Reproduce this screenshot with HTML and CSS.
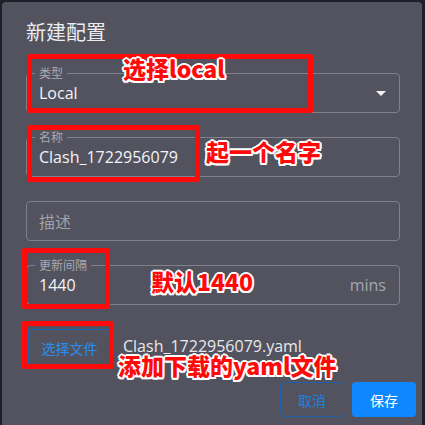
FILE: index.html
```html
<!DOCTYPE html>
<html lang="zh">
<head>
<meta charset="utf-8">
<link rel="stylesheet" href="styles.css">
</head>
<body>
<div class="dialog">
  <div class="title">新建配置</div>
  <div class="form">
    <div class="field">
      <span class="label">类型</span>
      <span class="value">Local</span>
      <svg class="caret" width="10" height="5" viewBox="0 0 10 5"><path d="M0 0 L10 0 L5 5 Z" fill="#f2f2f2"/></svg>
    </div>
    <div class="field">
      <span class="label">名称</span>
      <span class="value">Clash_1722956079</span>
    </div>
    <div class="field">
      <span class="placeholder">描述</span>
    </div>
    <div class="field">
      <span class="label">更新间隔</span>
      <span class="value">1440</span>
      <span class="unit">mins</span>
    </div>
    <div class="file-row">
      <div class="file-btn">选择文件</div>
      <span class="file-name">Clash_1722956079.yaml</span>
    </div>
  </div>
  <div class="actions">
    <div class="btn btn-outline">取消</div>
    <div class="btn btn-primary">保存</div>
  </div>
</div>

<div class="mark mark1"></div>
<div class="mark mark2"></div>
<div class="mark mark3"></div>
<div class="mark mark4"></div>
<div class="note note1">选择local</div>
<div class="note note2">起一个名字</div>
<div class="note note3">默认1440</div>
<div class="note note4">添加下载的yaml文件</div>
</body>
</html>
```

FILE: styles.css
```css
* { box-sizing: border-box; }
html, body {
  margin: 0;
  padding: 0;
  width: 425px;
  height: 425px;
  overflow: hidden;
  background: #20202a;
  font-family: "Open Sans", "Liberation Sans", "Noto Sans CJK SC", sans-serif;
}
.dialog {
  margin: 2px 0 0 2px;
  width: 420px;
  height: 440px;
  background: #52535e;
  border-radius: 4px;
  padding: 15px 0 0 0;
}
.title {
  padding: 0 24px;
  font-size: 20px;
  line-height: 30px;
  color: #ececf0;
  font-family: "Noto Sans CJK SC", sans-serif;
}
.form {
  margin-top: 26px;
  padding: 0 22px 0 24px;
  display: flex;
  flex-direction: column;
  gap: 24px;
}
.field {
  position: relative;
  height: 40px;
  border: 1px solid #80818c;
  border-radius: 4px;
  display: flex;
  align-items: center;
  padding: 0 13px 0 12px;
}
.label {
  position: absolute;
  top: -9px;
  left: 8px;
  padding: 0 4px;
  font-size: 12px;
  line-height: 16px;
  color: #a9aab3;
  background: #52535e;
  font-family: "Noto Sans CJK SC", sans-serif;
}
.value {
  flex: 1;
  font-size: 16px;
  color: #f4f4f6;
  line-height: 20px;
}
.placeholder {
  flex: 1;
  font-size: 16px;
  color: #a0a1aa;
  font-family: "Noto Sans CJK SC", sans-serif;
}
.caret { display: block; }
.unit {
  font-size: 16px;
  color: #a5a6ae;
}
.file-row {
  display: flex;
  align-items: center;
  gap: 12px;
}
.file-btn {
  width: 83px;
  height: 37px;
  margin-left: 2px;
  border: 1px solid #1e66b8;
  border-radius: 2px;
  display: flex;
  align-items: center;
  justify-content: center;
  font-size: 14px;
  color: #2a8ef0;
  font-family: "Noto Sans CJK SC", sans-serif;
}
.file-name {
  font-size: 16px;
  color: #e8e8ec;
  margin-top: -3px;
}
.actions {
  display: flex;
  justify-content: flex-end;
  gap: 8px;
  padding: 0 6px 0 0;
  margin-top: 16px;
}
.btn {
  width: 64px;
  height: 35px;
  border-radius: 4px;
  display: flex;
  align-items: center;
  justify-content: center;
  font-size: 14px;
  font-family: "Noto Sans CJK SC", sans-serif;
}
.btn-outline {
  border: 1px solid #1f5fa6;
  color: #1f80e6;
}
.btn-primary {
  background: #0f88ff;
  color: #ffffff;
}
.mark {
  position: absolute;
  border: 5px solid #ff0a0a;
  border-radius: 2px;
}
.mark1 { left: 27px; top: 54px; width: 286px; height: 59px; }
.mark2 { left: 27px; top: 125px; width: 173px; height: 57px; }
.mark3 { left: 22px; top: 248px; width: 88px; height: 61px; }
.mark4 { left: 22px; top: 321px; width: 92px; height: 48px; }
.note {
  position: absolute;
  font-family: "Noto Sans CJK SC", sans-serif;
  font-weight: 900;
  font-size: 23px;
  line-height: 23px;
  color: #ff0a0a;
  white-space: nowrap;
  text-shadow:
    2px 0 0 #fff, -2px 0 0 #fff, 0 2px 0 #fff, 0 -2px 0 #fff,
    1.5px 1.5px 0 #fff, -1.5px 1.5px 0 #fff, 1.5px -1.5px 0 #fff, -1.5px -1.5px 0 #fff;
}
.note1 { left: 123px; top: 57px; }
.note2 { left: 206px; top: 140px; }
.note3 { left: 151px; top: 270px; }
.note4 { left: 118px; top: 354px; }
```
